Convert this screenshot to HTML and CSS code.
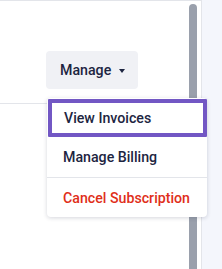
FILE: index.html
```html
<!DOCTYPE html>
<html>
<head>
<meta charset="utf-8">
<link rel="stylesheet" href="styles.css">
</head>
<body>
<div class="page">
  <div class="panel">
    <div class="content">
      <div class="header">
        <button class="manage">Manage <span class="caret"></span></button>
      </div>
      <div class="rule"></div>
    </div>
    <div class="scroll"><div class="thumb"></div></div>
  </div>
  <div class="menu">
    <div class="item focus">View Invoices</div>
    <div class="item">Manage Billing</div>
    <div class="item danger">Cancel Subscription</div>
  </div>
</div>
</body>
</html>
```
FILE: styles.css
```css
html, body { margin: 0; padding: 0; }
body {
  background: #f4f6fc;
  font-family: Roboto, "Noto Sans", sans-serif;
  width: 222px;
  height: 269px;
  overflow: hidden;
}
.page { position: relative; width: 222px; height: 269px; }
.panel {
  width: 202px;
  height: 269px;
  background: #fff;
  border-top: 1px solid #e3e5ea;
  border-right: 1px solid #e3e5ea;
  box-sizing: border-box;
  display: flex;
}
.content { flex: 1; }
.header { padding: 50px 0 0 46px; height: 52px; }
.manage {
  display: flex;
  align-items: center;
  gap: 8px;
  height: 38px;
  width: 92px;
  padding: 0 0 0 14px;
  border: 0;
  border-radius: 4px;
  background: #f0f1f5;
  font: 500 14.2px Roboto, "Noto Sans", sans-serif;
  color: #1d2541;
  box-sizing: border-box;
}
.caret {
  width: 0; height: 0;
  border-left: 3.5px solid transparent;
  border-right: 3.5px solid transparent;
  border-top: 4px solid #1d2541;
  margin-top: 1px;
}
.rule { height: 1px; background: #e3e5ea; }
.scroll { width: 10px; padding: 3px 2px 0 0; }
.thumb {
  width: 8px;
  height: 100%;
  background: #9aa0ac;
  border-radius: 4px 4px 0 0;
}
.menu {
  position: absolute;
  left: 47px;
  top: 98px;
  width: 160px;
  background: #fff;
  border-radius: 4px;
  box-shadow: 0 1px 4px rgba(20, 30, 60, 0.18);
}
.item {
  height: 40px;
  box-sizing: border-box;
  padding-left: 16px;
  display: flex;
  align-items: center;
  font-size: 14.2px;
  font-weight: 500;
  color: #1d2541;
}
.item.focus {
  border: 4px solid #7257c4;
  border-radius: 1px;
  padding-left: 12px;
  margin: 1px 0 0 1px;
  height: 38px;
}
.item.danger {
  border-top: 1px solid #e3e5ea;
  color: #df2f1a;
}
```
